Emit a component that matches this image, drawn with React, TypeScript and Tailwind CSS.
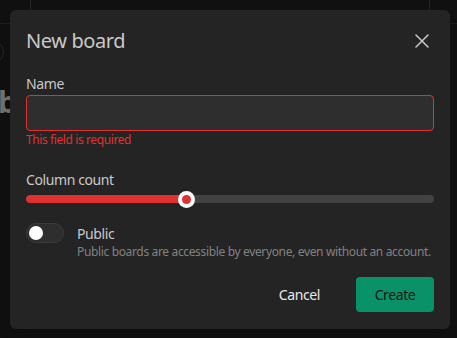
import React from 'react';

const font = { fontFamily: '"Noto Sans", "Open Sans", sans-serif' };

const CloseIcon = () => (
    <svg width="14" height="14" viewBox="0 0 14 14" fill="none" stroke="currentColor" strokeWidth="1.5" strokeLinecap="round">
        <path d="M1 1L13 13M13 1L1 13" />
    </svg>
);

export default function App() {
    return (
        <div className="relative w-[457px] h-[338px] overflow-hidden bg-[#101010]" style={font}>
            {/* page behind the overlay */}
            <div className="absolute left-0 right-0 top-0 h-[24px] border-b border-[#1d1d1d]" />
            <div className="absolute left-[30px] top-[-20px] w-[400px] h-[32px] rounded border border-[#242424]" />
            <div className="absolute left-[-18px] top-[41px] w-[22px] h-[22px] rounded-full border border-[#262626]" />
            <div className="absolute left-0 top-[84px] w-[10px] h-[36px] overflow-hidden">
                <span className="block -ml-[2px] text-[30px] font-bold text-[#707070] leading-[36px]">b</span>
            </div>

            {/* modal */}
            <div className="absolute left-[10px] top-[10px] w-[440px] rounded-md bg-[#242424] px-4 pt-4 pb-[17px] shadow-lg tracking-[-0.4px]">
                <div className="flex items-center justify-between h-[30px]">
                    <h2 className="text-[20px] leading-[28px] text-[#c9c9c9] font-normal">New board</h2>
                    <button className="w-[28px] h-[28px] flex items-center justify-center text-[#c9c9c9] -mr-[2px]">
                        <CloseIcon />
                    </button>
                </div>

                <label className="block mt-[18px] text-[14px] leading-[20px] text-[#c9c9c9]">Name</label>
                <input className="mt-[1px] block w-full h-[36px] rounded bg-[#2e2e2e] border border-[#e03131] outline-none px-3 text-[14px] text-[#c9c9c9]" />
                <p className="mt-[1px] text-[12px] leading-[16px] text-[#e03131]">This field is required</p>

                <label className="block mt-[22px] text-[14px] leading-[20px] text-[#c9c9c9]">Column count</label>
                <div className="relative h-[18px] flex items-center">
                    <div className="w-full h-[8px] rounded-full bg-[#424242] overflow-hidden">
                        <div className="h-full bg-[#e03131] rounded-full" style={{ width: '39.5%' }} />
                    </div>
                    <div className="absolute left-[152px] top-[1px] w-[17px] h-[17px] rounded-full bg-white flex items-center justify-center">
                        <div className="w-[9px] h-[9px] rounded-full bg-[#e03131]" />
                    </div>
                </div>

                <div className="mt-[15px] flex gap-[13px]">
                    <div className="w-[38px] h-[20px] rounded-full bg-[#2e2e2e] border border-[#3a3a3a] flex items-center px-[2px] shrink-0">
                        <div className="w-[14px] h-[14px] rounded-full bg-white" />
                    </div>
                    <div className="pt-[1px]">
                        <div className="text-[14px] leading-[20px] text-[#c9c9c9]">Public</div>
                        <div className="text-[12px] leading-[16px] text-[#828282] whitespace-nowrap tracking-[-0.35px]">
                            Public boards are accessible by everyone, even without an account.
                        </div>
                    </div>
                </div>

                <div className="mt-[17px] flex justify-end items-center gap-[18px]">
                    <button className="h-[35px] px-[18px] rounded text-[14px] text-[#e9e9e9]">Cancel</button>
                    <button className="h-[35px] w-[78px] rounded bg-[#099268] text-[14px] text-[#111]">Create</button>
                </div>
            </div>
        </div>
    );
}
